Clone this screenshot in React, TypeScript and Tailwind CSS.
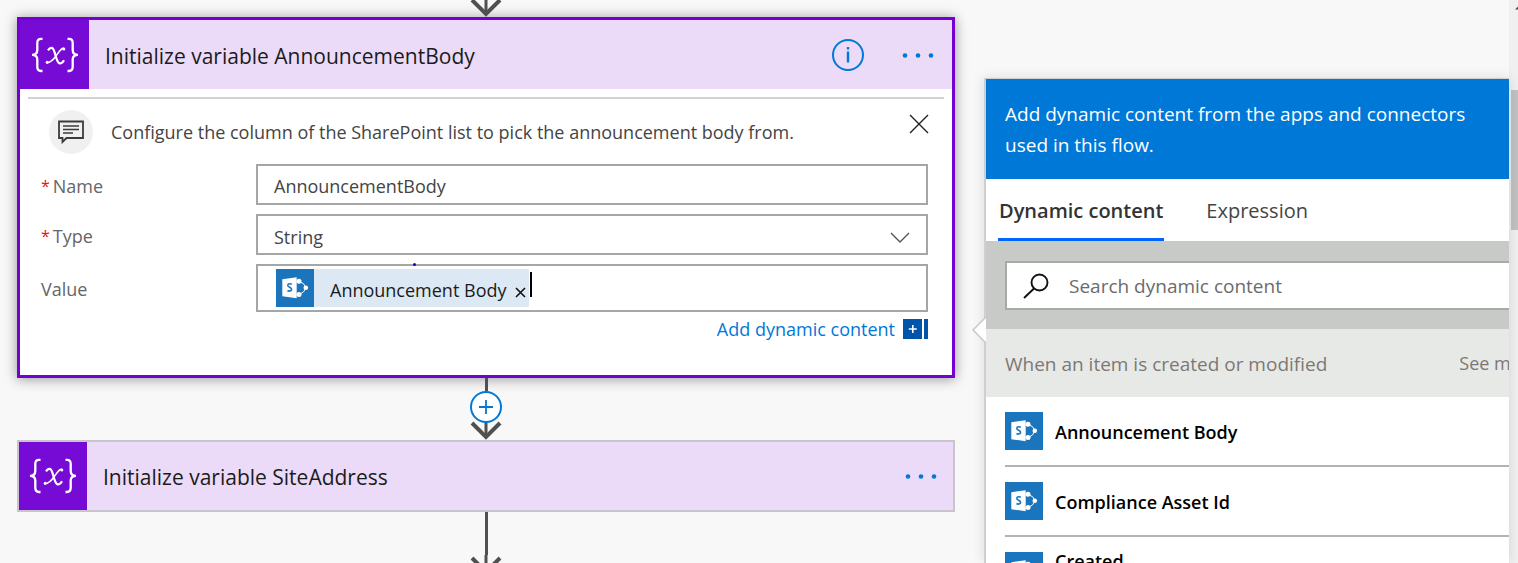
import React from "react";

function VariableIcon() {
  return (
    <svg viewBox="0 0 50 36" className="h-9 w-[50px] shrink-0" fill="none" stroke="#fff" aria-hidden="true">
      <path d="M12.500 1.800h-1.500C8 1.800 7.300 3.300 7.300 5.800v7.200c0 2.800-1.500 4.800-5.300 4.800 3.800 0 5.300 2 5.300 4.800v7.200c0 2.500.7 4.200 3.700 4.200h1.500" strokeWidth="2.300" />
      <path d="M37.500 1.800h1.500c3 0 3.700 1.500 3.700 4v7.200c0 2.800 1.500 4.800 5.300 4.800-3.800 0-5.300 2-5.300 4.800v7.200c0 2.500-.7 4.200-3.700 4.200h-1.500" strokeWidth="2.300" />
      <path d="M18 13.300c1.200-1.900 2.700-2.700 4-2.400 3.500.8 3.500 14.700 7.700 15.500 1.500.2 3.200-1.300 4.300-3.200" strokeWidth="2.200" />
      <path d="M34.500 11.600c-5.500-2.500-9 14.600-18 14.100" strokeWidth="1.500" />
      <circle cx="33.800" cy="12" r="1.500" fill="#fff" stroke="none" />
      <circle cx="17.200" cy="25.200" r="1.500" fill="#fff" stroke="none" />
    </svg>
  );
}

function SharePointIcon() {
  return (
    <svg viewBox="0 0 38 38" className="h-[38px] w-[38px] shrink-0" aria-hidden="true">
      <rect width="38" height="38" fill="#1b75bc" />
      <path d="M23.500 12.500Q28.500 14 30 18.700Q28.500 23.500 23.500 25.500" fill="none" stroke="#fff" strokeWidth="1" />
      <circle cx="23" cy="12.200" r="2.500" fill="#fff" />
      <circle cx="29.800" cy="18.700" r="2.300" fill="#fff" />
      <circle cx="23" cy="25.600" r="2.500" fill="#fff" />
      <path d="M6.300 10.300 20.700 8.200v21L6.300 27.200z" fill="#fff" />
      <path d="M15.800 15.200c-1.300-.7-4-.7-4 1.200s3.800 1.800 3.800 3.900c0 2.100-2.900 2.100-4.100 1.200" fill="none" stroke="#1b75bc" strokeWidth="1.600" />
    </svg>
  );
}

function MoreButton() {
  return (
    <button type="button" aria-label="More commands" className="flex h-8 w-8 items-center justify-center">
      <svg viewBox="0 0 32 8" className="h-2 w-8" fill="#0078d7" aria-hidden="true">
        <circle cx="3" cy="4.500" r="2.300" />
        <circle cx="16" cy="4.500" r="2.300" />
        <circle cx="29" cy="4.500" r="2.300" />
      </svg>
    </button>
  );
}

function ArrowHead() {
  return (
    <svg viewBox="0 0 32 20" className="h-5 w-8 shrink-0" fill="none" stroke="#505050" aria-hidden="true">
      <path d="M16 0v17" strokeWidth="3" />
      <path d="M2 3l14 14L30 3" strokeWidth="4" />
    </svg>
  );
}

function CardTitle({ children }: { children: React.ReactNode }) {
  return <h2 className="min-w-0 flex-1 truncate pt-0.5 pl-4 text-[21px] leading-8 text-[#1b1b1b]">{children}</h2>;
}

const fieldBox = "w-full border-2 border-[#a6a6a6] bg-white text-lg text-[#444]";

function FieldLabel({ htmlFor, required, children }: { htmlFor: string; required?: boolean; children: React.ReactNode }) {
  return (
    <label htmlFor={htmlFor} className="flex w-[215px] shrink-0 items-center gap-[3px] pt-0.5 text-lg text-[#666]">
      {required && <span className="text-base text-[#e81123]">*</span>}
      {children}
    </label>
  );
}

function ActiveCard() {
  return (
    <section className="border-[3px] border-[#7400d4] bg-white shadow-[0_1px_12px_rgba(0,0,0,0.4)]">
      <header className="flex items-center bg-[#ebdbf8]">
        <div className="flex h-[69px] w-[69px] shrink-0 items-center justify-center bg-[#770bd6]">
          <VariableIcon />
        </div>
        <CardTitle>Initialize variable AnnouncementBody</CardTitle>
        <div className="flex items-center gap-[38px] pr-[18px]">
          <button type="button" aria-label="Information">
            <svg viewBox="0 0 32 32" className="h-8 w-8" fill="none" stroke="#0078d7" strokeWidth="2" aria-hidden="true">
              <circle cx="16" cy="16" r="15" />
              <path d="M16 12.500v11M16 8v2.500" strokeWidth="2.400" />
            </svg>
          </button>
          <MoreButton />
        </div>
      </header>
      <div className="mx-2 mt-2 border-t-2 border-[#d2d2d2]" />
      <div className="flex h-[65px] items-center pr-[23px] pl-[29px]">
        <span className="flex h-11 w-11 shrink-0 items-center justify-center rounded-full bg-[#f0f0f0]">
          <svg viewBox="0 0 26 24" className="h-6 w-[26px]" fill="none" stroke="#3b3b3b" strokeWidth="1.800" aria-hidden="true">
            <path d="M1 1.500h24v16.500H8.500L4.500 22v-4H1z" />
            <path d="M5 6h16M5 9.500h16M5 13h10" strokeWidth="1.500" />
          </svg>
        </span>
        <p className="min-w-0 flex-1 truncate pl-[18px] text-lg text-[#444]">
          Configure the column of the SharePoint list to pick the announcement body from.
        </p>
        <button type="button" aria-label="Close comment" className="mb-4">
          <svg viewBox="0 0 20 20" className="h-5 w-5" stroke="#222" strokeWidth="1.400" aria-hidden="true">
            <path d="M1 1l18 18M19 1L1 19" />
          </svg>
        </button>
      </div>
      <div className="flex flex-col gap-[9px] pr-6 pl-[21px]">
        <div className="flex items-center">
          <FieldLabel htmlFor="name" required>Name</FieldLabel>
          <input id="name" defaultValue="AnnouncementBody" className={fieldBox + " h-[41px] px-4 pt-0.5 outline-none"} />
        </div>
        <div className="flex items-center">
          <FieldLabel htmlFor="type" required>Type</FieldLabel>
          <div className="relative min-w-0 flex-1">
            <select id="type" defaultValue="String" className={fieldBox + " block h-[41px] appearance-none px-4 pt-1 outline-none"}>
              <option>String</option>
            </select>
            <svg viewBox="0 0 20 12" className="pointer-events-none absolute top-[18px] right-[18px] h-3 w-5" fill="none" stroke="#555" strokeWidth="1.400" aria-hidden="true">
              <path d="M1 1l9 9 9-9" />
            </svg>
          </div>
        </div>
        <div className="flex items-center">
          <FieldLabel htmlFor="value">Value</FieldLabel>
          <div className={fieldBox + " relative flex h-12 min-w-0 flex-1 items-center pl-[18px]"}>
            <span className="absolute -top-[3px] left-[155px] h-[3px] w-[3px] rounded-full bg-[#0000f0]" />
            <span className="flex items-center bg-[#dce9f5] text-[#1b1b1b]">
              <SharePointIcon />
              <span className="pt-1 pl-4 whitespace-nowrap">Announcement Body</span>
              <button type="button" aria-label="Remove Announcement Body" className="mt-2 mr-[3px] ml-[9px]">
                <svg viewBox="0 0 11 11" className="h-[11px] w-[11px]" stroke="#111" strokeWidth="1.600" aria-hidden="true">
                  <path d="M1 1l9 9M10 1l-9 9" />
                </svg>
              </button>
            </span>
            <span className="mb-2 ml-px h-[25px] w-0.5 bg-black" />
            <input id="value" className="min-w-0 flex-1 outline-none" />
          </div>
        </div>
      </div>
      <div className="flex h-[63px] justify-end pt-[3px] pr-6">
        <button type="button" className="flex h-7 items-center text-lg text-[#0078d7]">
          Add dynamic content
          <svg viewBox="0 0 25 20" className="ml-2 h-5 w-[25px]" fill="#0055ab" aria-hidden="true">
            <path d="M0 0h19v20H0zM21 0h4v20h-4z" />
            <path d="M9.800 6v8M5.800 10h8" stroke="#fff" strokeWidth="1.600" />
          </svg>
        </button>
      </div>
    </section>
  );
}

function DynamicItem({ name, described }: { name: string; described?: boolean }) {
  return (
    <li className="flex h-[70px] items-center gap-3 border-b-2 border-[#b3b3b3] text-lg font-semibold text-black">
      <SharePointIcon />
      <span className={described ? "self-start pt-2.5" : "pt-0.5"}>{name}</span>
    </li>
  );
}

function DynamicContentPanel() {
  return (
    <aside className="relative mt-[78px] w-[525px] shrink-0 border-t border-l-2 border-[#cfcfcf] bg-white shadow-[0_0_12px_rgba(0,0,0,0.12)]">
      <svg viewBox="0 0 14 28" className="absolute top-[237px] -left-[14px] h-7 w-[14px]" aria-hidden="true">
        <path d="M14 1L1 14l13 13z" fill="#fff" />
        <path d="M14 1L1 14l13 13" fill="none" stroke="#c8c8c8" strokeWidth="1.500" />
      </svg>
      <div className="h-full overflow-hidden">
        <div className="w-[580px]">
          <p className="h-[100px] bg-[#0078d7] pt-5 pr-[90px] pl-[19px] text-[19px] leading-[31px] text-white">
            Add dynamic content from the apps and connectors used in this flow.
          </p>
          <div role="tablist" className="flex h-[62px] gap-[42px] pl-3 text-xl">
            <button type="button" role="tab" aria-selected="true" className="border-b-[3px] border-[#0064ff] px-px pt-1 font-semibold text-[#333]">
              Dynamic content
            </button>
            <button type="button" role="tab" aria-selected="false" className="border-b-[3px] border-transparent pt-1 text-[#444]">
              Expression
            </button>
          </div>
          <div className="bg-[#c8cac7] pt-5 pr-5 pb-[19px] pl-[19px]">
            <label className="flex h-[49px] items-center border-2 border-[#a8aaa8] bg-white pl-4">
              <svg viewBox="0 0 26 26" className="h-[26px] w-[26px]" fill="none" stroke="#111" strokeWidth="1.900" aria-label="Search">
                <circle cx="16.500" cy="9.500" r="8" />
                <path d="M11 15.500L1 25" />
              </svg>
              <input type="text" placeholder="Search dynamic content" aria-label="Search dynamic content" className="min-w-0 flex-1 pt-0.5 pl-5 text-[19px] outline-none placeholder:text-[#6b6b6b]" />
            </label>
          </div>
          <div className="flex h-[68px] items-center justify-between bg-[#e7e9e6] pr-[27px] pl-[19px] text-[#7d7875]">
            <h3 className="pt-0.5 text-[19px]">When an item is created or modified</h3>
            <button type="button" className="text-lg">See more</button>
          </div>
          <ul className="pl-[19px]">
            <DynamicItem name="Announcement Body" />
            <DynamicItem name="Compliance Asset Id" />
            <DynamicItem name="Created" described />
          </ul>
        </div>
      </div>
    </aside>
  );
}

export default function App() {
  return (
    <div className="flex h-screen overflow-hidden bg-[#f8f8f8] font-['Open_Sans',sans-serif]">
      <main className="min-w-0 flex-1 pr-[29px] pl-[17px]">
        <div className="flex h-[17px] flex-col items-center justify-end overflow-hidden">
          <ArrowHead />
        </div>
        <ActiveCard />
        <div className="flex h-[62px] flex-col items-center justify-end">
          <div className="h-[13px] w-[3px] shrink-0 bg-[#505050]" />
          <button type="button" aria-label="Insert a new step" className="z-10 -mb-[3px] flex h-8 w-8 shrink-0 items-center justify-center rounded-full border-2 border-[#0078d7] bg-white">
            <svg viewBox="0 0 16 16" className="h-4 w-4" stroke="#0078d7" strokeWidth="1.800" aria-hidden="true">
              <path d="M8 1v14M1 8h14" />
            </svg>
          </button>
          <ArrowHead />
        </div>
        <section className="flex items-center border-2 border-[#c8c4cc] bg-[#ebdbf8] pr-4">
          <div className="flex h-[68px] w-[68px] shrink-0 items-center justify-center bg-[#770bd6]">
            <VariableIcon />
          </div>
          <CardTitle>Initialize variable SiteAddress</CardTitle>
          <MoreButton />
        </section>
        <div className="flex flex-col items-center">
          <div className="h-[43px] w-[3px] bg-[#505050]" />
          <ArrowHead />
        </div>
      </main>
      <DynamicContentPanel />
      <div className="w-[9px] shrink-0 bg-[#f0f0f0] pl-0.5">
        <svg viewBox="0 0 7 90" className="h-[90px] w-[7px]" aria-hidden="true">
          <path d="M4 9.500L7 6.500v3z" fill="#505050" />
        </svg>
        <div className="h-[140px] bg-[#c1c1c1]" />
      </div>
    </div>
  );
}
